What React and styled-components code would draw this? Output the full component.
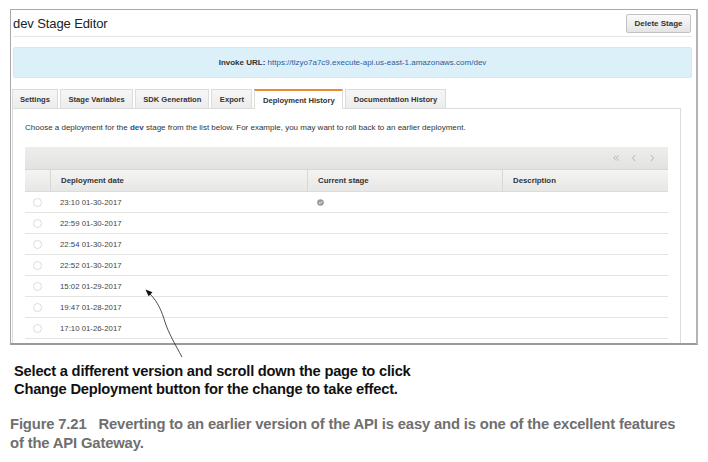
import React from 'react'
import styled, { createGlobalStyle } from 'styled-components'

const Global = createGlobalStyle`
  html, body {
    margin: 0;
    padding: 0;
    background: #fff;
  }
  body {
    font-family: "Liberation Sans", Arial, sans-serif;
  }
`

const Page = styled.div`
  position: relative;
  width: 708px;
  height: 462px;
  padding-top: 9px;
  box-sizing: border-box;
  overflow: hidden;
`

const Frame = styled.div`
  margin-left: 10px;
  width: 688px;
  height: 336px;
  box-sizing: border-box;
  border: 1px solid #a9a9a9;
  border-right: 2px solid #b4b4b4;
  border-bottom: 2px solid #9a9a9a;
  overflow: hidden;
  padding: 0 4px 0 2px;
`

const Header = styled.div`
  height: 26px;
  display: flex;
  align-items: center;
  justify-content: space-between;
  border-bottom: 1px solid #e6e6e6;
`

const Title = styled.h1`
  margin: 0;
  font-size: 13px;
  font-weight: normal;
  color: #222;
  letter-spacing: -0.1px;
`

const Button = styled.button`
  height: 19px;
  width: 65px;
  margin-right: 1px;
  margin-top: 1px;
  padding: 0;
  border: 1px solid #c2c2c2;
  border-radius: 2px;
  background: linear-gradient(#fafafa, #e4e4e4);
  font-family: "Liberation Sans", Arial, sans-serif;
  font-size: 8px;
  font-weight: bold;
  color: #333;
`

const InfoBox = styled.div`
  margin-top: 10px;
  height: 31px;
  box-sizing: border-box;
  border: 1px solid #d2e9f5;
  border-radius: 2px;
  background: #dcf0fa;
  display: flex;
  align-items: center;
  justify-content: center;
  font-size: 8px;
  color: #2a5d9c;
  b {
    color: #333;
  }
`

const TabArea = styled.div`
  margin: 11px 11px 0 -1px;
`

const TabRow = styled.div`
  display: flex;
  gap: 2px;
  height: 19px;
`

const Tab = styled.div`
  box-sizing: border-box;
  padding: 0 ${p => p.$pad}px;
  display: flex;
  align-items: center;
  font-size: 7.6px;
  font-weight: bold;
  color: #333;
  border: 1px solid #dcdcdc;
  border-bottom: none;
  border-top: ${p => (p.$active ? '2px solid #eb8a2e' : '1px solid #dcdcdc')};
  background: ${p => (p.$active ? '#fff' : 'linear-gradient(#f6f6f6, #ececec)')};
  position: relative;
  z-index: ${p => (p.$active ? 2 : 0)};
  margin-bottom: ${p => (p.$active ? '-1px' : '0')};
  height: ${p => (p.$active ? '20px' : '19px')};
`

const Panel = styled.div`
  border: 1px solid #dcdcdc;
  background: #fff;
  padding: 0 12px;
  height: 260px;
`

const Desc = styled.p`
  margin: 0;
  padding-top: 14px;
  height: 10px;
  line-height: 10px;
  font-size: 8px;
  color: #333;
  b {
    color: #1d4f91;
  }
`

const Table = styled.div`
  margin-top: 14px;
`

const Toolbar = styled.div`
  height: 23px;
  box-sizing: border-box;
  background: linear-gradient(#ededeb, #e2e2e0);
  border-bottom: 1px solid #d6d6d2;
  display: flex;
  align-items: center;
  justify-content: flex-end;
  gap: 10px;
  padding-right: 12px;
`

const Grid = styled.div`
  display: grid;
  grid-template-columns: 25px 257px 195px 1fr;
  height: ${p => (p.$head ? 22 : 21)}px;
  box-sizing: border-box;
  border-bottom: 1px solid ${p => (p.$head ? '#dcdcd8' : '#e4e4e0')};
  background: ${p => (p.$head ? 'linear-gradient(#f4f4f2, #e7e7e5)' : '#fff')};
`

const Cell = styled.div`
  display: flex;
  align-items: center;
  font-size: 7.8px;
  font-weight: ${p => (p.$head ? 'bold' : 'normal')};
  color: ${p => (p.$head ? '#333' : '#444')};
  border-left: ${p => (p.$head && !p.$first ? '1px solid #d8d8d4' : 'none')};
  justify-content: ${p => (p.$first ? 'center' : 'flex-start')};
  padding-left: ${p => (p.$first ? 0 : 10)}px;
`

const Radio = styled.span`
  width: 9px;
  height: 9px;
  box-sizing: border-box;
  border-radius: 50%;
  border: 1px solid #dcdcdc;
  background: #fff;
`

const Annotation = styled.p`
  margin: 17px 0 0 14px;
  font-family: "Liberation Sans Narrow", "Liberation Sans", sans-serif;
  font-weight: bold;
  font-size: 14.7px;
  letter-spacing: -0.22px;
  line-height: 18px;
  color: #111;
`

const Caption = styled.p`
  margin: 17px 0 0 10px;
  font-family: "Liberation Sans Narrow", "Liberation Sans", sans-serif;
  font-weight: bold;
  font-size: 14.8px;
  letter-spacing: -0.15px;
  line-height: 19px;
  color: #6f6f6f;
  span {
    margin-right: 12px;
  }
`

const Arrow = styled.svg`
  position: absolute;
  left: 0;
  top: 0;
  pointer-events: none;
`

function Chevron({ d }) {
  return (
    <svg width="8" height="8" viewBox="0 0 8 8">
      <path d={d} fill="none" stroke="#b0b0b0" strokeWidth="0.9" />
    </svg>
  )
}

function CheckDot() {
  return (
    <svg width="7" height="7" viewBox="0 0 7 7">
      <circle cx="3.5" cy="3.5" r="3.3" fill="#9a9a9a" />
      <path d="M2 3.6 L3.1 4.6 L5 2.5" fill="none" stroke="#fff" strokeWidth="0.9" />
    </svg>
  )
}

const tabs = [
  ['Settings', 7],
  ['Stage Variables', 7.5],
  ['SDK Generation', 7],
  ['Export', 7.5],
  ['Deployment History', 7.5, true],
  ['Documentation History', 7.5],
]

const rows = [
  '23:10 01-30-2017',
  '22:59 01-30-2017',
  '22:54 01-30-2017',
  '22:52 01-30-2017',
  '15:02 01-29-2017',
  '19:47 01-28-2017',
  '17:10 01-26-2017',
]

export default function App() {
  return (
    <Page>
      <Global />
      <Frame>
        <Header>
          <Title>dev Stage Editor</Title>
          <Button>Delete Stage</Button>
        </Header>
        <InfoBox>
          <b>Invoke URL:</b>&nbsp;https://tlzyo7a7c9.execute-api.us-east-1.amazonaws.com/dev
        </InfoBox>
        <TabArea>
          <TabRow>
            {tabs.map(([label, pad, active]) => (
              <Tab key={label} $pad={pad} $active={active}>{label}</Tab>
            ))}
          </TabRow>
          <Panel>
            <Desc>
              Choose a deployment for the <b>dev</b> stage from the list below. For example, you may want to roll back to an earlier deployment.
            </Desc>
            <Table>
              <Toolbar>
                <Chevron d="M4 1.5 L1.8 4 L4 6.5 M6.6 1.5 L4.4 4 L6.6 6.5" />
                <Chevron d="M5 1 L2.5 4 L5 7" />
                <Chevron d="M3 1 L5.5 4 L3 7" />
              </Toolbar>
              <Grid $head>
                <Cell $head $first />
                <Cell $head>Deployment date</Cell>
                <Cell $head>Current stage</Cell>
                <Cell $head>Description</Cell>
              </Grid>
              {rows.map((r, i) => (
                <Grid key={r}>
                  <Cell $first><Radio /></Cell>
                  <Cell>{r}</Cell>
                  <Cell>{i === 0 && <CheckDot />}</Cell>
                  <Cell />
                </Grid>
              ))}
            </Table>
          </Panel>
        </TabArea>
      </Frame>
      <Annotation>
        Select a different version and scroll down the page to click<br />
        Change Deployment button for the change to take effect.
      </Annotation>
      <Caption>
        <span>Figure 7.21</span>Reverting to an earlier version of the API is easy and is one of the excellent features<br />
        of the API Gateway.
      </Caption>
      <Arrow width="708" height="462" viewBox="0 0 708 462">
        <path d="M150 294 C 158 302, 162 312, 165 322 S 176 346, 182 357" fill="none" stroke="#222" strokeWidth="0.8" />
        <path d="M145.5 289.5 L152.5 292.2 L148.6 296.3 Z" fill="#111" />
      </Arrow>
    </Page>
  )
}
